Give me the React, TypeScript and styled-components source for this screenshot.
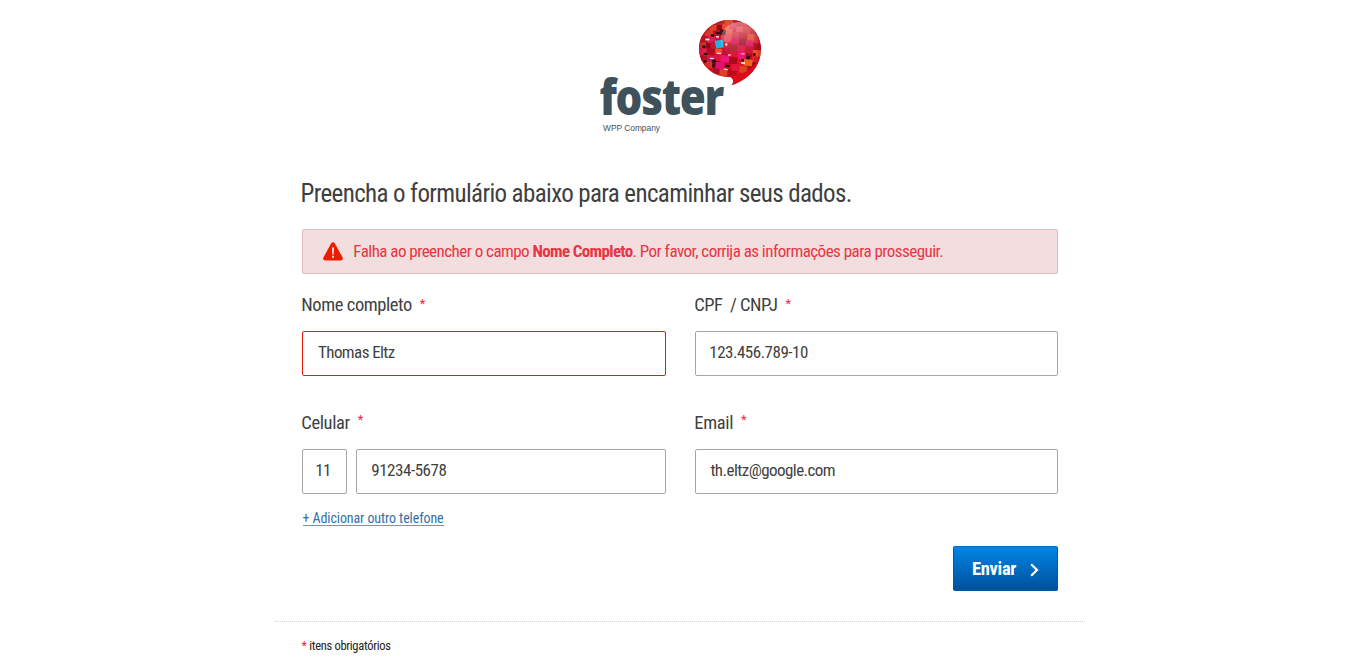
import React from "react";
import styled, { createGlobalStyle } from "styled-components";

const Global = createGlobalStyle`
  * { box-sizing: border-box; }
  body { margin: 0; background: #fff; color: #3f3f3f; font-family: "Roboto Condensed", Roboto, sans-serif; font-stretch: 75%; }
`;

const Page = styled.main`
  width: 810px;
  height: 672px;
  margin-left: 275px;
  padding-top: 18px;
  display: flex;
  flex-direction: column;
  overflow: hidden;
`;

const Header = styled.header`
  height: 160px;
  flex: none;
  padding-left: 323px;
  svg { display: block; }
`;

const Wordmark = styled.text`
  font-family: "Open Sans", sans-serif;
  font-stretch: 100%;
  font-weight: 800;
  font-size: 49px;
  letter-spacing: -1.5px;
  fill: #3f525c;
`;

const Tagline = styled.text`
  font-family: "Liberation Sans", sans-serif;
  font-size: 9px;
  fill: #3f525c;
`;

const Form = styled.form`
  height: 443px;
  flex: none;
  padding: 0 27px;
`;

const Title = styled.h1`
  margin: 0 0 0 -1.5px;
  height: 31px;
  line-height: 32px;
  font-weight: 400;
  font-size: 25px;
  letter-spacing: -0.62px;
  white-space: nowrap;
`;

const Alert = styled.div`
  margin-top: 20px;
  height: 45px;
  display: flex;
  align-items: center;
  padding: 0 0 2px 20px;
  gap: 10.3px;
  background: #f2dede;
  border: 1px solid #e3bcc0;
  border-radius: 2px;
  color: #e93545;
  font-size: 17px;
  letter-spacing: -0.53px;
  white-space: nowrap;
  svg { display: block; margin-top: 2px; }
  b { letter-spacing: -0.66px; }
`;

const Fields = styled.div`
  display: grid;
  grid-template-columns: 364px 363px;
  column-gap: 29px;
  row-gap: 29px;
  margin-top: 13px;
`;

const Label = styled.div<{ $tracking: number }>`
  height: 44px;
  margin-left: -0.7px;
  line-height: 36px;
  font-size: 18.5px;
  letter-spacing: ${(p) => p.$tracking}px;
  white-space: pre;
  display: flex;
  gap: 8px;
`;

const Star = styled.span<{ $raise?: number }>`
  color: #f2283c;
  font-size: 13px;
  line-height: ${(p) => 33 - (p.$raise ?? 0) * 2}px;
`;

const Inputs = styled.div`
  display: flex;
  gap: 9px;
`;

const Field = styled.div<{ $w?: number; $error?: boolean; $pad: number; $tracking: number }>`
  width: ${(p) => (p.$w ? p.$w + "px" : "100%")};
  height: 45px;
  line-height: 41px;
  padding-left: ${(p) => p.$pad}px;
  border: 1px solid ${(p) => (p.$error ? "#e8190a" : "#a6a6a6")};
  border-radius: 2px;
  font-size: 17px;
  letter-spacing: ${(p) => p.$tracking}px;
`;

const AddPhone = styled.a`
  display: block;
  width: 141px;
  height: 16px;
  margin-top: 16px;
  margin-left: 0.5px;
  line-height: 16px;
  font-size: 14px;
  letter-spacing: -0.1px;
  white-space: nowrap;
  color: #386f9f;
  border-bottom: 1px solid #6d97ba;
`;

const Submit = styled.button`
  display: flex;
  align-items: center;
  gap: 14px;
  width: 105px;
  height: 45px;
  margin: 20px 0 0 auto;
  padding: 0 0 0 18px;
  border: 1px solid #00589f;
  border-top-color: #0a6fc0;
  border-radius: 2px;
  background: linear-gradient(#0085e6, #00509a);
  color: #fff;
  font: inherit;
  font-stretch: 75%;
  font-size: 18.5px;
  font-weight: 700;
  letter-spacing: -0.3px;
  svg { margin-top: 2px; }
`;

const Footer = styled.footer`
  border-top: 1px dotted #d2d2d2;
  padding: 15px 26.5px 0;
  line-height: 17px;
  font-size: 12.5px;
  letter-spacing: -0.3px;
  color: #222;
  b { color: #f2283c; font-weight: 400; }
`;

const BALLOON =
  "M110 210C118 200 115 192 107 187C55 187 12 152 12 101C12 52 53 15 105 15C158 15 198 52 198 102C198 150 164 194 110 210Z";

/* x, y, width, height, fill */
const TILES: [number, number, number, number, string][] = [
  [60, 16, 24, 18, "#c3202b"], [82, 12, 26, 16, "#e2502e"], [108, 14, 26, 16, "#b8141f"],
  [38, 34, 22, 20, "#d9472b"], [60, 34, 16, 14, "#8e1019"], [76, 28, 22, 18, "#e9492d"], [98, 26, 20, 16, "#d41f45"],
  [26, 52, 24, 18, "#e03a2c"], [50, 50, 22, 20, "#c31128"], [70, 46, 20, 16, "#4a0d12"], [88, 42, 20, 20, "#e84a35"],
  [16, 70, 20, 22, "#b21828"], [36, 68, 22, 22, "#e01b5a"], [84, 62, 24, 20, "#e83f5b"],
  [14, 90, 18, 18, "#d7392d"], [32, 90, 16, 16, "#8a0a17"], [46, 84, 18, 22, "#cf1330"], [62, 104, 22, 16, "#f0502a"],
  [14, 108, 22, 20, "#e51e54"], [36, 106, 24, 20, "#b20c22"], [82, 100, 22, 22, "#c90c36"],
  [20, 128, 20, 18, "#a81a20"], [40, 126, 20, 20, "#dd0f5c"], [60, 120, 22, 20, "#d91642"], [80, 122, 26, 22, "#ef1478"],
  [34, 146, 24, 18, "#d9342a"], [56, 142, 22, 20, "#4b0a14"], [66, 144, 28, 22, "#e01175"], [92, 144, 22, 20, "#c40f1e"],
  [60, 164, 20, 16, "#ae1220"], [80, 166, 24, 18, "#e0402a"], [104, 164, 26, 20, "#b80d18"],
  [118, 32, 22, 18, "#dd3a4a"], [140, 32, 22, 20, "#d4242f"], [162, 36, 20, 18, "#b31822"],
  [108, 50, 22, 18, "#cc2c3a"], [130, 50, 24, 18, "#c31c2c"], [154, 52, 22, 20, "#e4462a"], [176, 58, 22, 20, "#d2232c"],
  [106, 68, 24, 20, "#dd1656"], [130, 68, 22, 20, "#9a2230"], [150, 72, 24, 18, "#df1a62"], [174, 78, 24, 20, "#ab0d1c"],
  [104, 88, 22, 20, "#a62733"], [126, 88, 24, 20, "#e01c4e"], [150, 90, 24, 20, "#c31634"], [174, 98, 24, 20, "#ed5128"],
  [106, 108, 24, 18, "#dd1134"], [130, 108, 24, 22, "#ed1571"], [154, 110, 20, 18, "#b4081d"], [172, 118, 22, 18, "#d9202a"],
  [106, 126, 24, 20, "#a80b1c"], [130, 130, 20, 20, "#df1424"], [150, 128, 26, 20, "#ed641f"], [176, 136, 16, 18, "#8f0c16"],
  [114, 146, 24, 20, "#e5143f"], [138, 150, 24, 20, "#de421e"], [162, 148, 20, 18, "#ba0c1b"],
];

const DARK: [number, number, number, number][] = [
  [58, 54, 12, 7], [44, 63, 10, 7], [22, 98, 9, 8], [28, 120, 10, 6], [54, 138, 12, 6],
  [156, 118, 10, 10], [142, 128, 8, 7], [96, 150, 12, 6], [30, 142, 8, 7], [176, 108, 7, 8],
];

const GLINTS: [number, number, number, number][] = [
  [29, 77, 12, 5], [60, 67, 9, 4], [90, 86, 6, 7], [67, 116, 12, 4], [48, 133, 11, 4],
  [142, 138, 12, 5], [140, 112, 10, 3], [92, 162, 12, 4], [101, 118, 8, 4],
];

function Logo() {
  return (
    <svg width="168" height="120" viewBox="598 18 168 120">
      <defs>
        <clipPath id="balloon"><path d={BALLOON} /></clipPath>
        <radialGradient id="shade" cx="0.5" cy="0.45" r="0.55">
          <stop offset="0.75" stopColor="#a00010" stopOpacity="0" />
          <stop offset="1" stopColor="#8c0010" stopOpacity="0.5" />
        </radialGradient>
        <linearGradient id="shine" x1="0.35" y1="0" x2="0.5" y2="1">
          <stop offset="0" stopColor="#fff" stopOpacity="0.42" />
          <stop offset="0.7" stopColor="#fff" stopOpacity="0.06" />
          <stop offset="1" stopColor="#fff" stopOpacity="0" />
        </linearGradient>
      </defs>
      <g transform="translate(695 15) scale(0.3333)">
        <g clipPath="url(#balloon)">
          <rect width="210" height="225" fill="#d3111f" />
          <g transform="rotate(5 105 100)">
            {TILES.map(([x, y, w, h, c], i) => <rect key={i} x={x} y={y} width={w} height={h} fill={c} />)}
            {DARK.map(([x, y, w, h], i) => <rect key={i} x={x} y={y} width={w} height={h} fill="#2b0d12" />)}
            {GLINTS.map(([x, y, w, h], i) => <rect key={i} x={x} y={y} width={w} height={h} fill="#ffe9ea" />)}
            <path d="M57 81L81 76L85 99L64 104Z" fill="#22b1e6" />
          </g>
          <path d={BALLOON} fill="url(#shade)" />
          <path d="M108 184C150 178 180 158 196 120C200 158 160 205 108 212Z" fill="#dc0c18" />
          <ellipse cx="133" cy="74" rx="56" ry="53" fill="url(#shine)" />
        </g>
      </g>
      <Wordmark x="599.5" y="115" textLength="123.5" lengthAdjust="spacingAndGlyphs">foster</Wordmark>
      <Tagline x="603" y="131" textLength="57" lengthAdjust="spacingAndGlyphs">WPP Company</Tagline>
    </svg>
  );
}

export default function App() {
  return (
    <Page>
      <Global />
      <Header><Logo /></Header>
      <Form>
        <Title>Preencha o formulário abaixo para encaminhar seus dados.</Title>
        <Alert>
          <svg width="20" height="19" viewBox="0 0 20 19">
            <path d="M8.3 1.3Q10-.9 11.7 1.3L19.6 15.4Q20.6 18.4 17.6 18.5H2.4Q-.6 18.4.4 15.4Z" fill="#ec1c00" />
            <path d="M9 5.5h2l-.3 7H9.3ZM9 13.8h2v2H9Z" fill="#f7dedc" />
          </svg>
          <span>Falha ao preencher o campo <b>Nome Completo</b>. Por favor, corrija as informações para prosseguir.</span>
        </Alert>
        <Fields>
          <div>
            <Label $tracking={-0.42}>Nome completo<Star>*</Star></Label>
            <Inputs><Field $pad={15} $tracking={-0.58} $error>Thomas Eltz</Field></Inputs>
          </div>
          <div>
            <Label $tracking={-0.5}>CPF  / CNPJ<Star>*</Star></Label>
            <Inputs><Field $pad={13.3} $tracking={-0.5}>123.456.789-10</Field></Inputs>
          </div>
          <div>
            <Label $tracking={-0.38}>Celular<Star $raise={2}>*</Star></Label>
            <Inputs>
              <Field $w={45} $pad={12.2} $tracking={-0.5}>11</Field>
              <Field $w={310} $pad={14.2} $tracking={-0.45}>91234-5678</Field>
            </Inputs>
          </div>
          <div>
            <Label $tracking={-0.35}>Email<Star $raise={2}>*</Star></Label>
            <Inputs><Field $pad={14.4} $tracking={-0.55}>th.eltz@google.com</Field></Inputs>
          </div>
        </Fields>
        <AddPhone>+ Adicionar outro telefone</AddPhone>
        <Submit type="button">
          Enviar
          <svg width="9" height="14" viewBox="0 0 9 14" fill="none" stroke="#fff" strokeWidth="2.2"><path d="M1.2 1.2L7 7l-5.8 5.8" /></svg>
        </Submit>
      </Form>
      <Footer><b>*</b> itens obrigatórios</Footer>
    </Page>
  );
}
